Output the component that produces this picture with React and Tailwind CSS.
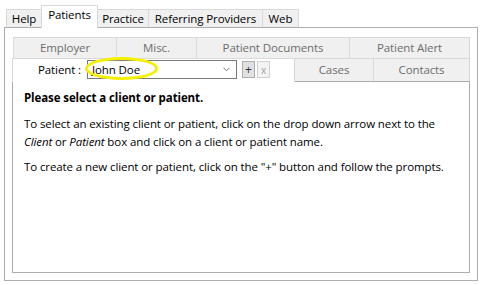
export default function App() {
  const font = { fontFamily: '"Open Sans", "Noto Sans", sans-serif' };
  const topTab = "flex items-center justify-center h-[18px] mb-px border border-b-0 border-[#d9d9d9] bg-[#f0f0f0] text-[11.5px] tracking-[-0.1px] text-black -ml-px";
  const subTab = "flex items-center justify-center h-[21px] border border-b-0 border-[#d9d9d9] bg-[#f0f0f0] text-[11.5px] tracking-[-0.1px] text-[#6d6d6d] -ml-px";
  return (
    <div className="w-[481px] h-[285px] bg-white overflow-hidden" style={font}>
      {/* top tabs */}
      <div className="flex items-end h-[28px] pl-[7px] relative z-10">
        <div className={topTab + " w-[36px]"}>Help</div>
        <div className="flex items-center justify-center h-[23px] w-[57px] -ml-px border border-b-0 border-[#d9d9d9] bg-white text-[11.5px] tracking-[-0.1px] text-black pb-[4px]">Patients</div>
        <div className={topTab + " w-[52px]"}>Practice</div>
        <div className={topTab + " w-[115px]"}>Referring Providers</div>
        <div className={topTab + " w-[37px]"}>Web</div>
      </div>
      {/* outer panel */}
      <div className="-mt-px ml-[4px] w-[474px] h-[254px] border border-[#adadad] pt-[9px] px-[7px] pb-[7px] flex flex-col">
        {/* row 1 */}
        <div className="flex h-[21px] pl-[2px] pr-0">
          <div className={subTab + " w-[104px]"}>Employer</div>
          <div className={subTab + " w-[81px]"}>Misc.</div>
          <div className={subTab + " w-[154px]"}>Patient Documents</div>
          <div className={subTab + " flex-1"}>Patient Alert</div>
        </div>
        {/* row 2 */}
        <div className="flex items-end h-[24px] relative z-10">
          <div className="relative flex items-center h-[24px] w-[283px] border border-b-0 border-[#d9d9d9] bg-white pl-[25px] pb-[2px]">
            <span className="text-[11.5px] tracking-[-0.1px] text-black w-[49px]">Patient :</span>
            <div className="relative flex items-center justify-between h-[19px] w-[150px] border border-[#7a7a7a] bg-white pl-[4px] pr-[6px]">
              <span className="text-[11.5px] tracking-[-0.1px] text-black leading-none">John Doe</span>
              <svg width="7" height="5" viewBox="0 0 7 5"><path d="M0.5 0.8 L3.5 3.8 L6.5 0.8" fill="none" stroke="#707070" strokeWidth="1" /></svg>
            </div>
            <div className="ml-[5px] flex items-center justify-center w-[13px] h-[17px] border border-[#adadad] bg-[#e1e1e1] text-[12px] leading-none text-[#333]">+</div>
            <div className="ml-[2px] flex items-center justify-center w-[13px] h-[17px] border border-[#d0d0d0] bg-[#f4f4f4] text-[10px] leading-none text-[#a0a0a0]">x</div>
            <div className="absolute left-[72px] top-[-2px] w-[73px] h-[23px] rounded-[50%] border-[3px] border-[#f5f000]" />
          </div>
          <div className="flex items-center justify-center h-[23px] w-[80px] -ml-px border border-b-0 border-[#d9d9d9] bg-[#f0f0f0] text-[11.5px] tracking-[-0.1px] text-[#6d6d6d] mb-px">Cases</div>
          <div className="flex items-center justify-center h-[23px] flex-1 -ml-px border border-b-0 border-[#d9d9d9] bg-[#f0f0f0] text-[11.5px] tracking-[-0.1px] text-[#6d6d6d] mb-px">Contacts</div>
        </div>
        {/* inner panel */}
        <div className="-mt-px flex-1 border border-[#adadad] bg-white pt-[7px] pl-[11px] pr-[8px] text-[11.5px] tracking-[-0.1px] leading-[18px] text-black">
          <p className="font-bold">Please select a client or patient.</p>
          <p className="mt-[8px]">To select an existing client or patient, click on the drop down arrow next to the <i>Client</i> or <i>Patient</i> box and click on a client or patient name.</p>
          <p className="mt-[7px]">To create a new client or patient, click on the "+" button and follow the prompts.</p>
        </div>
      </div>
    </div>
  );
}
